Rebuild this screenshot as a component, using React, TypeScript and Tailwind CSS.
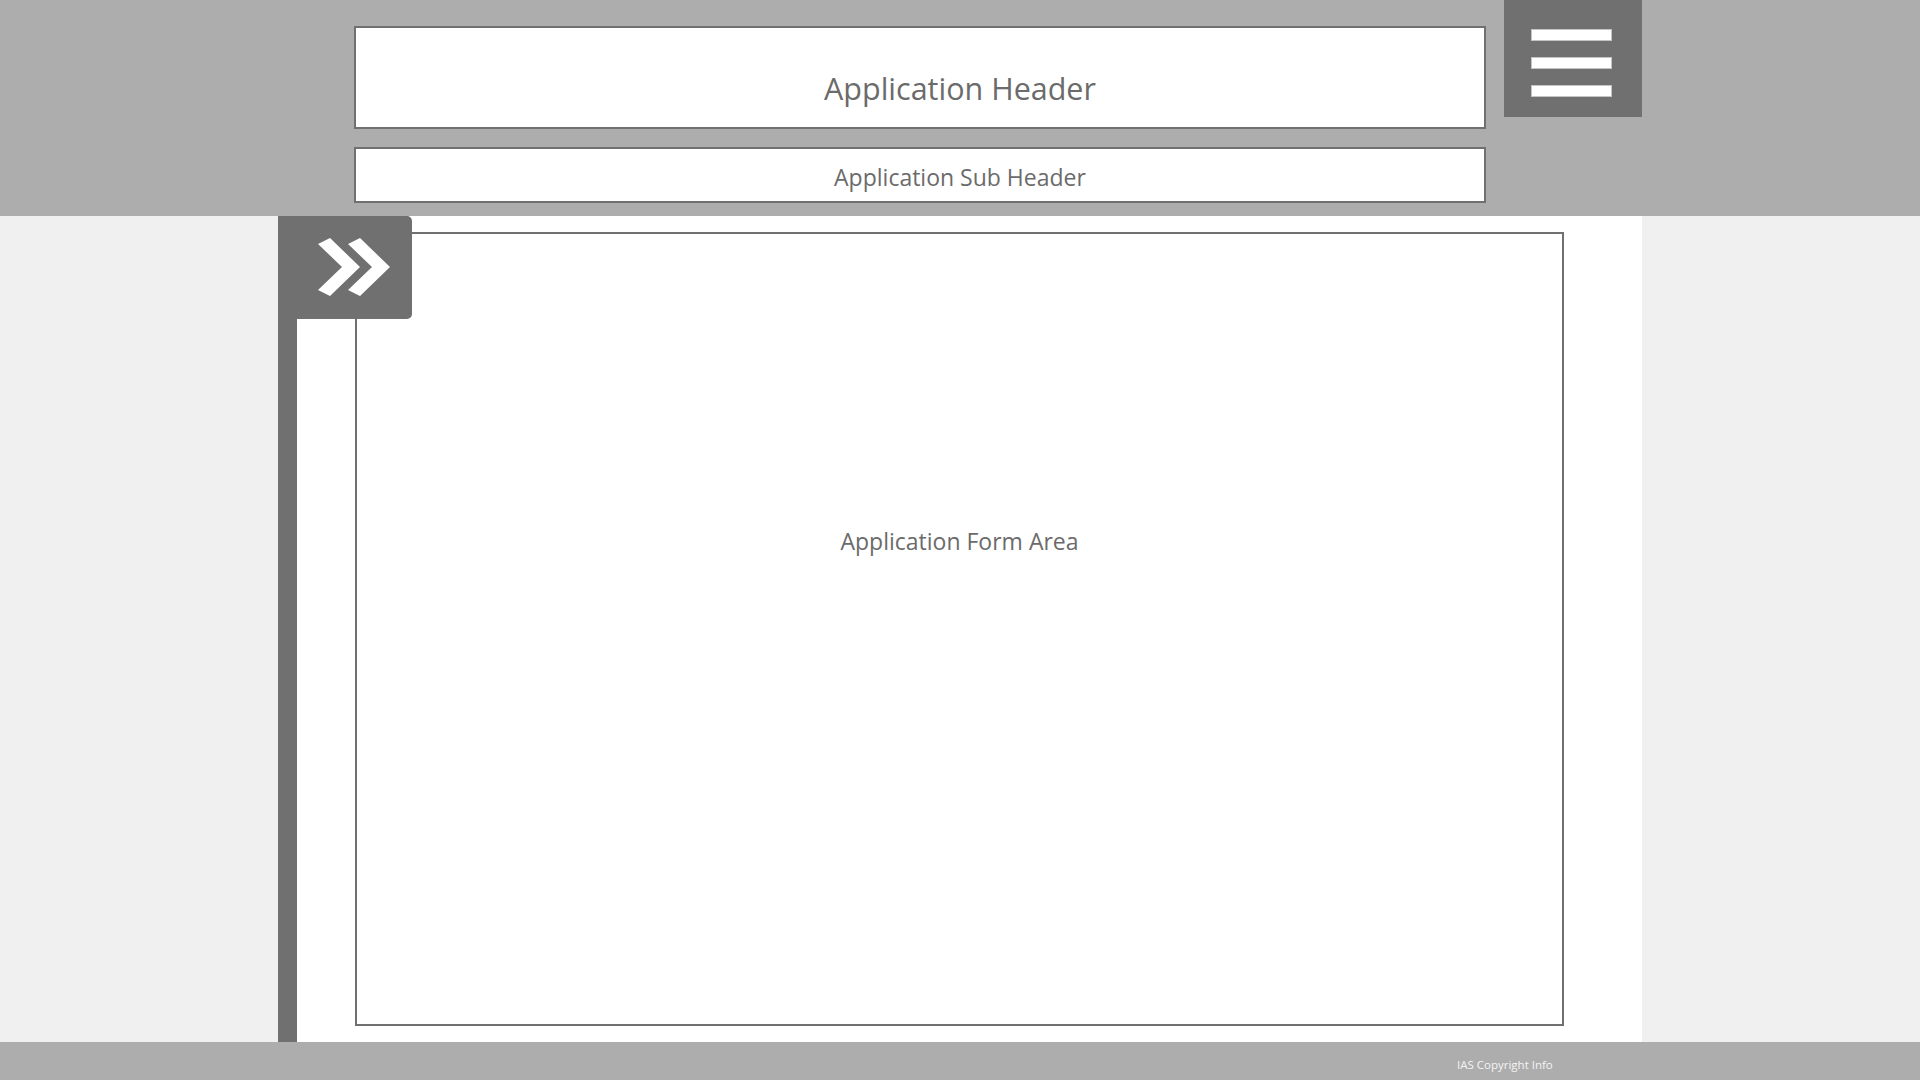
import React from "react";

export default function App() {
  const font = { fontFamily: '"Open Sans", "Noto Sans", sans-serif' };
  return (
    <div className="w-full h-[1080px] flex flex-col bg-[#f0f0f0]" style={font}>
      {/* Top band */}
      <div className="h-[216px] bg-[#adadad] shrink-0">
        <div className="w-[1364px] mx-auto h-full flex items-start">
          <div className="ml-[76px] w-[1132px] flex flex-col">
            <div className="mt-[26px] h-[103px] bg-white border-2 border-[#707070] flex justify-center pt-[40px] pl-[80px]">
              <span className="text-[30.5px] leading-[40px] text-[#6b6b6b]">Application Header</span>
            </div>
            <div className="mt-[18px] h-[56px] bg-white border-2 border-[#707070] flex justify-center pt-[13px] pl-[80px]">
              <span className="text-[23px] leading-[30px] text-[#6b6b6b]">Application Sub Header</span>
            </div>
          </div>
          <div className="ml-[18px] w-[138px] h-[117px] bg-[#707070] flex flex-col items-center pt-[29px] pr-[3px] gap-[16px]">
            <div className="w-[81px] h-[12px] bg-white border border-[#c4c4c4]" />
            <div className="w-[81px] h-[12px] bg-white border border-[#c4c4c4]" />
            <div className="w-[81px] h-[12px] bg-white border border-[#c4c4c4]" />
          </div>
        </div>
      </div>

      {/* Main */}
      <div className="flex-1 min-h-0">
        <div className="w-[1364px] mx-auto h-full bg-white flex">
          <div className="relative w-[19px] h-full bg-[#707070] shrink-0">
            <div className="absolute top-0 left-0 w-[134px] h-[103px] bg-[#707070] rounded-r-[5px] z-10">
              <svg width="134" height="103" viewBox="0 0 134 103">
                <polygon points="40,28 52,22 82,51 52,80 40,74 64,51" fill="#ffffff" />
                <polygon points="70,28 82,22 112,51 82,80 70,74 94,51" fill="#ffffff" />
              </svg>
            </div>
          </div>
          <div className="flex-1 pl-[58px] pr-[78px] py-[16px]">
            <div className="h-full border-2 border-[#707070] flex justify-center items-start pt-[292px]">
              <span className="text-[23px] leading-[30px] text-[#6b6b6b]">Application Form Area</span>
            </div>
          </div>
        </div>
      </div>

      {/* Footer */}
      <div className="h-[38px] bg-[#adadad] shrink-0">
        <div className="w-[1364px] mx-auto h-full pl-[1179px] pt-[9px]">
          <span className="text-[11.5px] leading-[16px] text-[#f4f4f4] whitespace-nowrap">IAS Copyright Info</span>
        </div>
      </div>
    </div>
  );
}
